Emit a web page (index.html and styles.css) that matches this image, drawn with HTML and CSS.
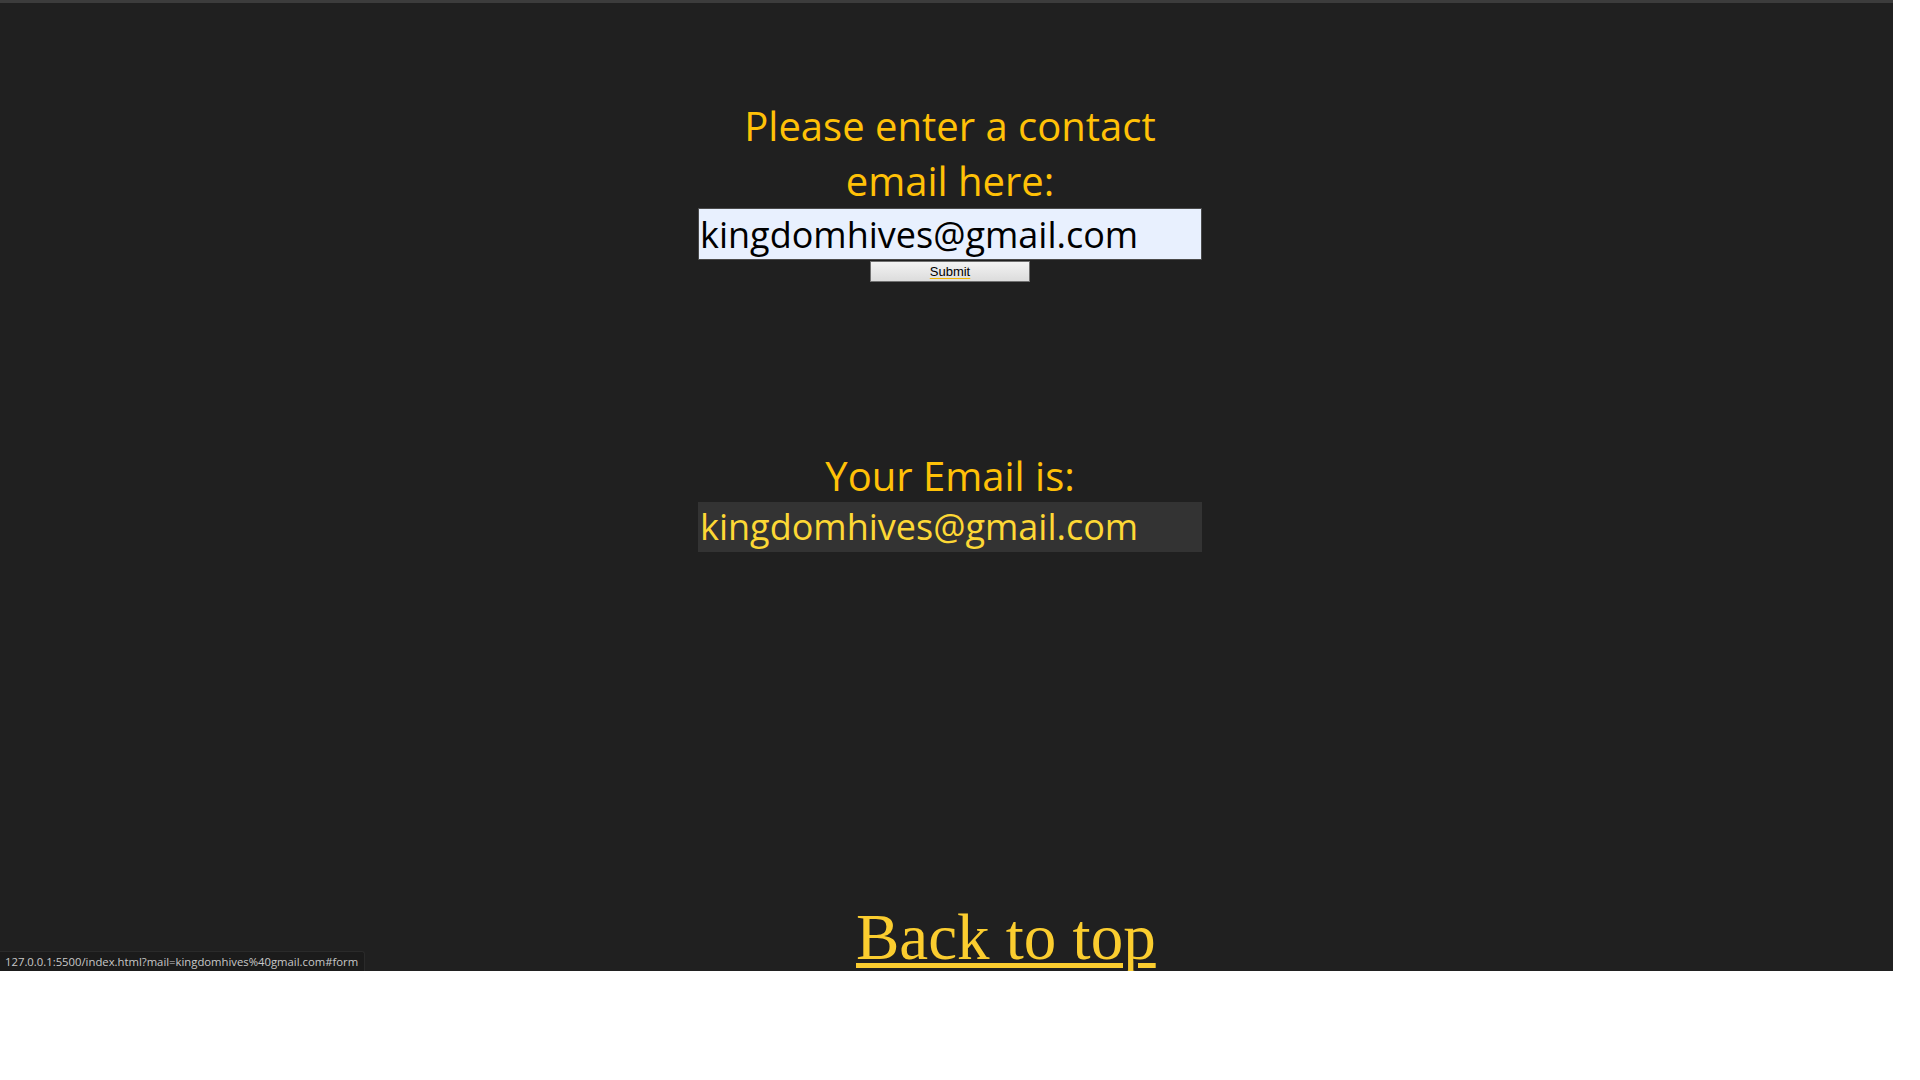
FILE: index.html
```html
<!DOCTYPE html>
<html lang="en">
<head>
<meta charset="utf-8">
<title>Contact email</title>
<link rel="stylesheet" href="styles.css">
</head>
<body>
<div class="screen">
  <div class="content">
    <form class="form" id="form">
      <h1 class="prompt">Please enter a contact email here:</h1>
      <input class="email-input" type="text" name="mail" value="kingdomhives@gmail.com">
      <a class="submit-link" href="#form"><button class="submit" type="button">Submit</button></a>
    </form>
    <section class="result">
      <h2 class="result-title">Your Email is:</h2>
      <div class="output">kingdomhives@gmail.com</div>
    </section>
  </div>
  <div class="back-row"><a class="back" href="#">Back to top</a></div>
  <div class="status">127.0.0.1:5500/index.html?mail=kingdomhives%40gmail.com#form</div>
</div>
</body>
</html>
```

FILE: styles.css
```css
html, body {
  margin: 0;
  padding: 0;
  background: #ffffff;
}

.screen {
  width: 1893px;
  height: 971px;
  box-sizing: border-box;
  border-top: 3px solid #3c3c3c;
  background: #202020;
  overflow: hidden;
  position: relative;
  font-family: "Open Sans", "Noto Sans", sans-serif;
}

.content {
  display: flex;
  flex-direction: column;
  align-items: center;
  padding-left: 7px;
  padding-top: 96px;
}

.form {
  width: 504px;
  display: flex;
  flex-direction: column;
  align-items: center;
  margin: 0;
}

.prompt {
  margin: 0;
  font-family: "Open Sans", sans-serif;
  font-weight: 400;
  font-size: 40px;
  line-height: 54.5px;
  color: #ffc107;
  text-align: center;
}

.email-input {
  width: 504px;
  height: 52px;
  box-sizing: border-box;
  border: 1px solid #4a4a4a;
  background: #e8f0fe;
  color: #000000;
  font-family: "Open Sans", sans-serif;
  font-size: 36px;
  padding: 0 1px;
  margin: 0;
  outline: none;
}

.submit-link {
  display: block;
  margin-top: 1px;
  text-decoration: none;
}

.submit {
  display: block;
  width: 160px;
  height: 21px;
  box-sizing: border-box;
  border: 1px solid #707070;
  background: linear-gradient(#f3f3f3, #dcdcdc);
  font-family: "Liberation Sans", Arial, sans-serif;
  font-size: 13px;
  color: #000000;
  padding: 0;
  text-decoration: underline;
  text-decoration-color: #f0b400;
  text-underline-offset: 2px;
}

.result {
  width: 504px;
  display: flex;
  flex-direction: column;
  align-items: center;
  margin-top: 167px;
}

.result-title {
  margin: 0;
  font-family: "Open Sans", sans-serif;
  font-weight: 400;
  font-size: 40px;
  line-height: 53px;
  color: #ffc107;
  text-align: center;
}

.output {
  width: 504px;
  height: 50px;
  box-sizing: border-box;
  background: #333333;
  color: #fdd835;
  font-family: "Open Sans", sans-serif;
  font-size: 36px;
  line-height: 50px;
  padding-left: 2px;
}

.back-row {
  display: flex;
  padding-left: 856px;
  margin-top: 348px;
}

.back {
  font-family: "Liberation Serif", "Times New Roman", serif;
  font-size: 65px;
  color: #fbcd2f;
  text-decoration: underline;
  text-decoration-thickness: 5px;
  text-underline-offset: 4px;
}

.status {
  position: absolute;
  left: 0;
  bottom: 0;
  height: 19px;
  padding: 0 6px 0 5px;
  background: #1b1b1b;
  border-top: 1px solid #2a2a2a;
  border-right: 1px solid #2a2a2a;
  border-top-right-radius: 3px;
  color: #c8c8c8;
  font-family: "Open Sans", sans-serif;
  font-size: 11.3px;
  line-height: 19px;
  white-space: nowrap;
}
```
